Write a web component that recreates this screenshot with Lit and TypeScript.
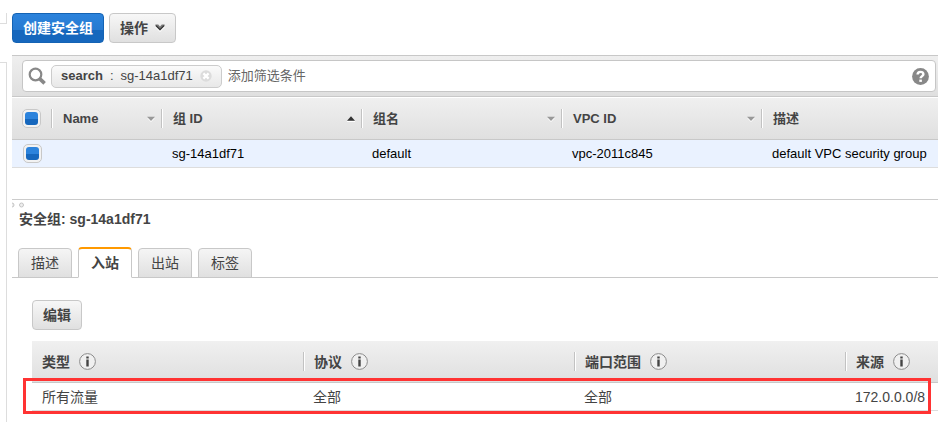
import { LitElement, html, css, svg, nothing } from "lit";
import { customElement, state } from "lit/decorators.js";
import { classMap } from "lit/directives/class-map.js";

type Sort = "none" | "idle" | "asc";
interface Column {
  label: string;
  sort: Sort;
}

const GROUP_COLUMNS: Column[] = [
  { label: "Name", sort: "idle" },
  { label: "组 ID", sort: "asc" },
  { label: "组名", sort: "idle" },
  { label: "VPC ID", sort: "idle" },
  { label: "描述", sort: "none" },
];
const GROUP_ROWS = [
  ["", "sg-14a1df71", "default", "vpc-2011c845", "default VPC security group"],
];
const TABS = ["描述", "入站", "出站", "标签"];
const RULE_COLUMNS = ["类型", "协议", "端口范围", "来源"];
const RULE_ROWS = [["所有流量", "全部", "全部", "172.0.0.0/8"]];

const sortIcon = (sort: Sort) =>
  sort === "none"
    ? nothing
    : svg`<svg class="sort" width="8" height="6" viewBox="0 0 8 6" aria-hidden="true">
        ${
          sort === "asc"
            ? svg`<path d="M0 5.5H8" stroke="#fff"/><path d="M4 0.2L8 4.8H0Z" fill="#333"/>`
            : svg`<path d="M0.2 2.2L4 6L7.8 2.2Z" fill="#fff"/><path d="M0 0.8H8L4 5Z" fill="#999"/>`
        }
      </svg>`;

const infoIcon = svg`<svg width="17" height="17" viewBox="0 0 17 17" aria-hidden="true">
  <circle cx="8.5" cy="8.5" r="7.9" fill="#f0f0f0" stroke="#8c8c8c"/>
  <path d="M7.3 3.5H9.7V5.5H7.3ZM7.3 6.5H9.7V13.5H7.3Z" fill="#444"/>
</svg>`;

@customElement("app-root")
export class AppRoot extends LitElement {
  @state() private activeTab = 1;

  static styles = css`
    :host {
      display: block;
      font-family: "Liberation Sans", "Noto Sans CJK SC", sans-serif;
      font-size: 14px;
      line-height: 20px;
      color: #444;
      background: #fff;
    }
    * {
      box-sizing: border-box;
    }
    button,
    input {
      font: inherit;
      color: inherit;
      margin: 0;
    }
    svg {
      display: block;
      flex: none;
    }
    .page {
      display: grid;
      grid-template-columns: 7px minmax(0, 1fr);
      column-gap: 5px;
      min-height: 100vh;
      padding-top: 13px;
      overflow: hidden;
    }
    .rail {
      display: flex;
      flex-direction: column;
      gap: 38px;
    }
    .rail-top {
      height: 11px;
      border: solid #ddd;
      border-width: 0 1px 1px 0;
    }
    .rail-rest {
      flex: 1;
      border: solid #ddd;
      border-width: 1px 1px 0 0;
    }
    .toolbar {
      display: flex;
      gap: 5px;
      padding-bottom: 12px;
    }
    .btn {
      display: flex;
      align-items: center;
      gap: 7px;
      height: 30px;
      padding: 0 10px;
      border: 1px solid #c8c8c8;
      border-radius: 4px;
      background: linear-gradient(#f7f7f7, #e0e0e0);
      font-weight: bold;
    }
    .primary {
      border-color: #1463b4;
      background: linear-gradient(#2c83dc, #267ad1 56%, #1667bd 56%, #1667bd);
      color: #fff;
    }
    .filter {
      padding: 4px 2px 4px 10px;
      border: solid #c8c8c8;
      border-width: 1px 0;
      background: linear-gradient(#efefef, #dfdfdf);
    }
    .search {
      display: flex;
      align-items: center;
      height: 32px;
      padding: 0 6px 0 5px;
      border: 1px solid #c6c6c6;
      border-radius: 4px;
      background: #fff;
      font-size: 13px;
    }
    .token {
      display: flex;
      align-items: center;
      gap: 7px;
      height: 23px;
      margin-left: 5px;
      padding: 0 9px;
      border: 1px solid #ccc;
      border-radius: 5px;
      background: linear-gradient(#fafafa, #e8e8e8);
    }
    .clear {
      display: block;
      padding: 0;
      border: 0;
      background: none;
    }
    .query {
      flex: 1;
      min-width: 0;
      padding: 0 0 0 6px;
      border: 0;
      outline: 0;
      background: none;
    }
    .query::placeholder {
      color: #666;
      opacity: 1;
    }
    table {
      width: 100%;
      border-collapse: separate;
      border-spacing: 0;
      table-layout: fixed;
    }
    th,
    td {
      padding: 0;
      text-align: left;
      white-space: nowrap;
    }
    thead {
      background: linear-gradient(#f0f0f0, #dfdfdf);
    }
    th {
      height: 43px;
      border-bottom: 1px solid #c8c8c8;
    }
    td {
      height: 28px;
      border-bottom: 1px solid #ddd;
    }
    .head {
      display: flex;
      align-items: center;
      height: 19px;
      padding: 0 6px 0 10px;
      border-left: 1px solid #c2c2c2;
      box-shadow: inset 1px 0 #fff;
    }
    .groups {
      font-size: 13px;
    }
    .groups th {
      border-top: 1px solid #fff;
    }
    .groups .head {
      justify-content: space-between;
      padding-left: 11px;
    }
    .groups td {
      padding-left: 11px;
      background: #eaf2ff;
      color: #000;
    }
    .groups th.pick {
      width: 39px;
      padding-left: 10px;
    }
    .name {
      width: 110px;
    }
    .wide {
      width: 200px;
    }
    .check {
      display: block;
      appearance: none;
      width: 19px;
      height: 19px;
      padding: 2px;
      border: 1px solid #c8c8c8;
      border-radius: 5px;
      background: #f2f2f2;
    }
    .check:checked::before {
      content: "";
      display: block;
      width: 13px;
      height: 13px;
      border-radius: 3px;
      background: linear-gradient(#2c83dc 54%, #1667bd 54%);
    }
    .splitter {
      display: flex;
      gap: 2px;
      height: 10px;
      margin-top: 31px;
      padding-top: 2px;
      border-top: 1px solid #ccc;
    }
    h2 {
      margin: 0;
      padding: 0 7px;
      font-size: 14px;
      line-height: 20px;
    }
    .tabs {
      display: flex;
      align-items: flex-end;
      gap: 6px;
      margin-top: 18px;
      padding: 0 6px;
      box-shadow: inset 0 -1px #c8c8c8;
    }
    .tab {
      width: 54px;
      height: 30px;
      padding: 0;
      border: 1px solid #c8c8c8;
      border-radius: 4px 4px 0 0;
      background: linear-gradient(#f5f5f5, #e0e0e0);
    }
    .active {
      height: 31px;
      border-top: 2px solid #f90;
      border-bottom-color: #fff;
      background: #fff;
      font-weight: bold;
    }
    .panel {
      padding: 22px 0 7px 20px;
    }
    .rules {
      position: relative;
      margin-top: 11px;
    }
    .rules .head {
      gap: 9px;
    }
    .rules th {
      width: 271px;
      height: 42px;
    }
    .rules th:last-child {
      width: auto;
    }
    .rules th:first-child .head {
      border-left-color: transparent;
      box-shadow: none;
      padding-left: 9px;
    }
    .rules td {
      padding-left: 10px;
    }
    .marker {
      position: absolute;
      left: -9px;
      right: 7px;
      bottom: -3px;
      height: 36px;
      border: 3px solid #f33;
      pointer-events: none;
    }
  `;

  private renderGroups() {
    return html`<table class="groups">
      <thead>
        <tr>
          <th class="pick">
            <input class="check" type="checkbox" aria-label="全选" checked />
          </th>
          ${GROUP_COLUMNS.map(
            (c, i) => html`<th
              scope="col"
              class=${classMap({ name: i === 0, wide: i > 0 && i < 4 })}
            >
              <div class="head">${c.label}${sortIcon(c.sort)}</div>
            </th>`
          )}
        </tr>
      </thead>
      <tbody>
        ${GROUP_ROWS.map(
          (row) => html`<tr>
            <td class="pick">
              <input class="check" type="checkbox" aria-label=${row[1]} checked />
            </td>
            ${row.map((cell) => html`<td>${cell}</td>`)}
          </tr>`
        )}
      </tbody>
    </table>`;
  }

  private renderRules() {
    return html`<div class="rules">
      <table>
        <thead>
          <tr>
            ${RULE_COLUMNS.map(
              (label) => html`<th scope="col">
                <div class="head">${label}${infoIcon}</div>
              </th>`
            )}
          </tr>
        </thead>
        <tbody>
          ${RULE_ROWS.map(
            (row) => html`<tr>${row.map((cell) => html`<td>${cell}</td>`)}</tr>`
          )}
        </tbody>
      </table>
      <div class="marker"></div>
    </div>`;
  }

  render() {
    return html`<div class="page">
      <div class="rail">
        <div class="rail-top"></div>
        <div class="rail-rest"></div>
      </div>
      <main>
        <div class="toolbar">
          <button class="btn primary">创建安全组</button>
          <button class="btn">
            操作
            <svg width="10" height="8" viewBox="0 0 10 8" aria-hidden="true">
              <path d="M0 1.5H3L5 3.5L7 1.5H10V3L5 8L0 3Z" fill="#fff" />
              <path d="M0.4 0.5H3.2L5 2.4L6.8 0.5H9.6V2L5 6.6L0.4 2Z" fill="#777" />
              <path d="M1 1.6L5 5.6L9 1.6" fill="none" stroke="#333" stroke-width="1.2" />
            </svg>
          </button>
        </div>
        <div class="filter">
          <div class="search">
            <svg width="18" height="18" viewBox="0 0 18 18" aria-hidden="true">
              <circle cx="7.5" cy="7.5" r="5.8" fill="none" stroke="#888" stroke-width="2.2" />
              <path d="M11.6 11.6L16.6 16.4" stroke="#888" stroke-width="3.6" />
            </svg>
            <div class="token">
              <b>search</b><span>:</span><span>sg-14a1df71</span>
              <button class="clear" aria-label="清除">
                <svg width="12" height="12" viewBox="0 0 12 12" aria-hidden="true">
                  <circle cx="6" cy="6" r="5.7" fill="#dcdcdc" />
                  <path d="M3.4 3.4L8.6 8.6M8.6 3.4L3.4 8.6" stroke="#fff" stroke-width="2.2" />
                </svg>
              </button>
            </div>
            <input class="query" type="text" aria-label="筛选" placeholder="添加筛选条件" />
            <button class="clear" aria-label="帮助">
              <svg width="17" height="17" viewBox="0 0 17 17" aria-hidden="true">
                <circle cx="8.5" cy="8.5" r="8.4" fill="#888" />
                <path
                  d="M5.6 6.6C5.6 4.7 6.8 3.9 8.5 3.9S11.4 4.8 11.4 6.3C11.4 8.1 8.6 8.2 8.6 10.3"
                  fill="none"
                  stroke="#fff"
                  stroke-width="2.4"
                />
                <path d="M7.3 11.6H9.9V13.9H7.3Z" fill="#fff" />
              </svg>
            </button>
          </div>
        </div>
        ${this.renderGroups()}
        <div class="splitter">
          <svg width="12" height="6" viewBox="0 0 12 6" aria-hidden="true">
            <circle cx="0" cy="3" r="2" fill="#eee" stroke="#c4c4c4" />
            <circle cx="9.5" cy="3" r="2" fill="#eee" stroke="#c4c4c4" />
          </svg>
        </div>
        <h2>安全组: sg-14a1df71</h2>
        <div class="tabs" role="tablist">
          ${TABS.map(
            (label, i) => html`<button
              role="tab"
              aria-selected=${i === this.activeTab}
              class=${classMap({ tab: true, active: i === this.activeTab })}
              @click=${() => (this.activeTab = i)}
            >
              ${label}
            </button>`
          )}
        </div>
        <section class="panel">
          <button class="btn">编辑</button>
          ${this.renderRules()}
        </section>
      </main>
    </div>`;
  }
}
